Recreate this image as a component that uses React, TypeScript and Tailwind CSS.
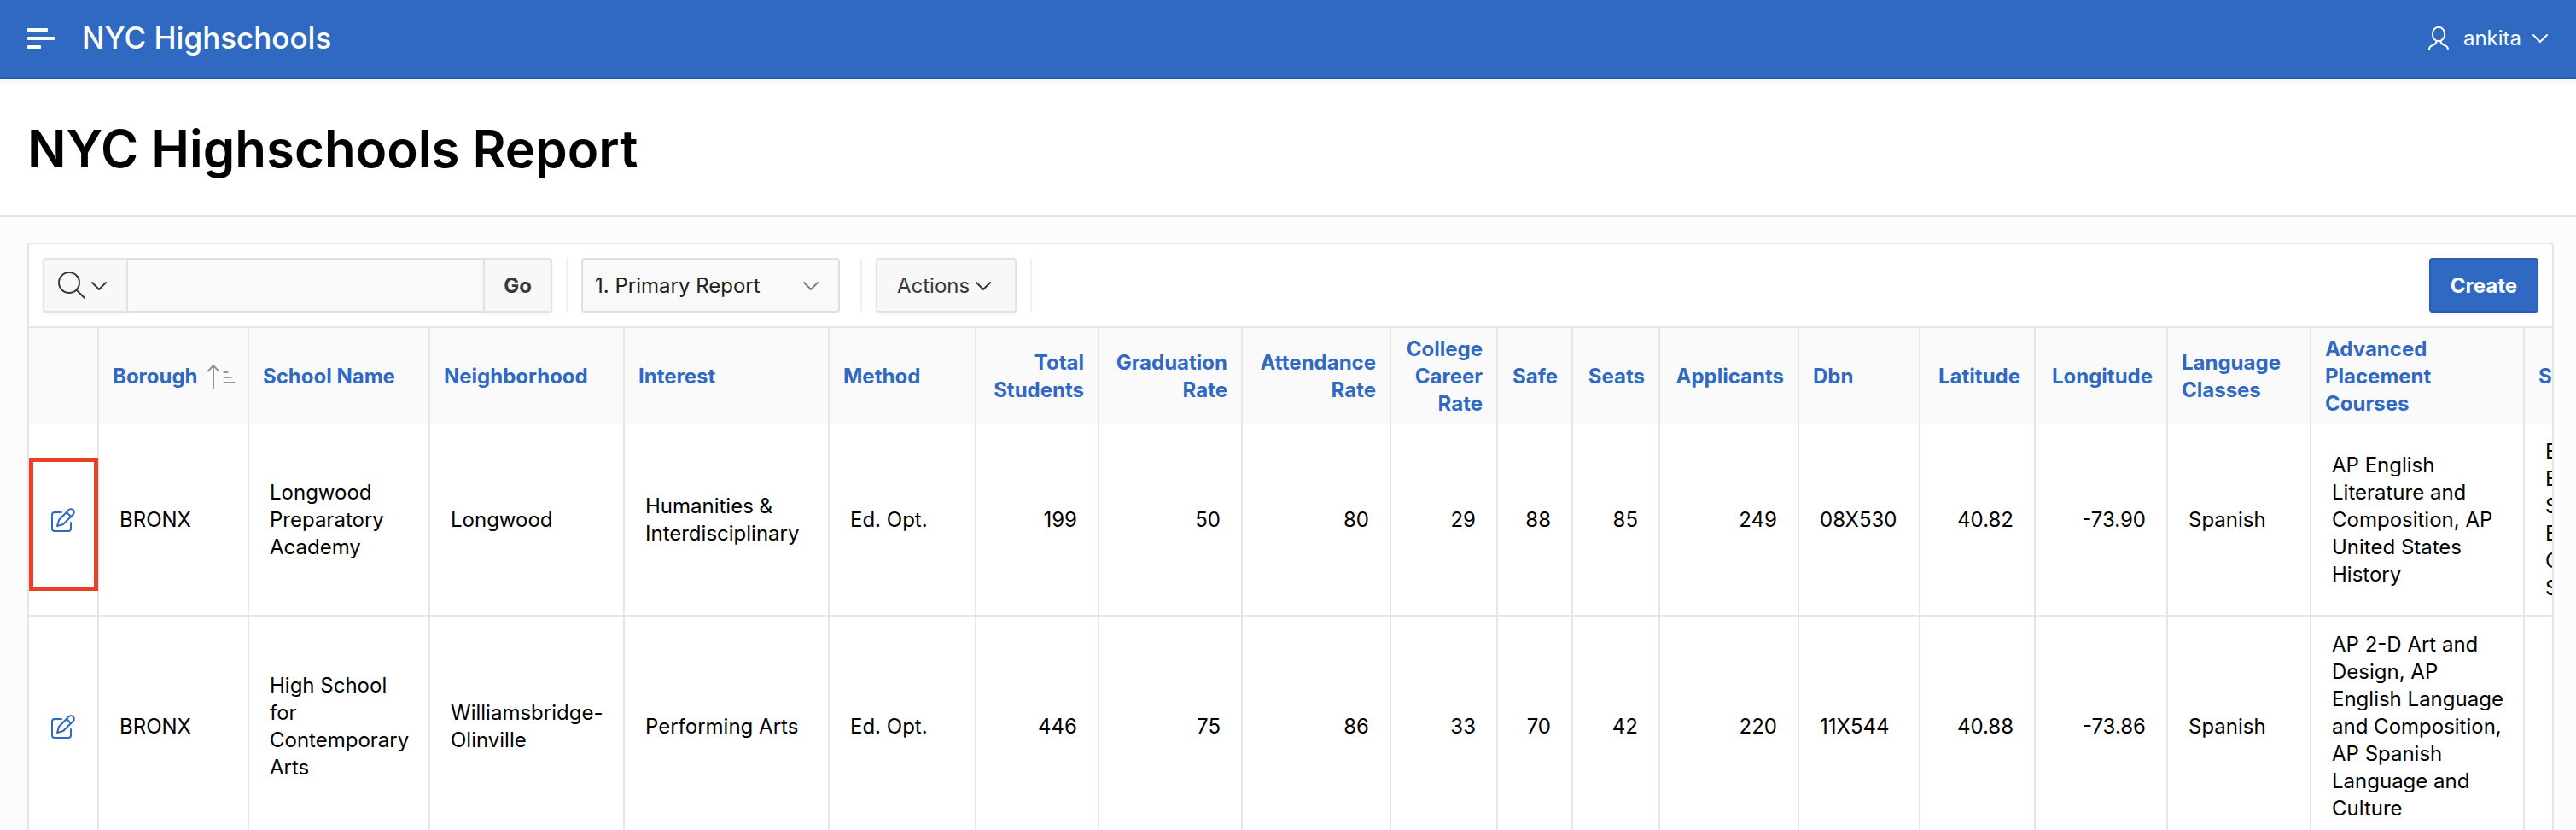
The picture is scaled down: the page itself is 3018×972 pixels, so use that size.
import React from "react";

type IconProps = { className?: string };

const ChevronDown = ({ className }: IconProps) => (
  <svg viewBox="0 0 20 12" fill="none" stroke="currentColor" strokeWidth="2" strokeLinecap="round" strokeLinejoin="round" className={className} aria-hidden="true">
    <path d="M2 2l8 8 8-8" />
  </svg>
);

const MenuIcon = () => (
  <svg viewBox="0 0 32 24" fill="currentColor" className="h-6 w-8" aria-hidden="true">
    <rect x="0" y="0" width="24" height="4" rx="1" />
    <rect x="0" y="10" width="32" height="4" rx="1" />
    <rect x="0" y="20" width="16" height="4" rx="1" />
  </svg>
);

const UserIcon = () => (
  <svg viewBox="0 0 26 30" fill="none" stroke="currentColor" strokeWidth="2" strokeLinecap="round" className="h-[30px] w-[26px]" aria-hidden="true">
    <ellipse cx="13" cy="10" rx="7.2" ry="8.2" />
    <path d="M10.500 18.200c0 4-2.500 3.800-5.500 5.200C2.500 24.600 2 25.500 2 28M15.500 18.200c0 4 2.500 3.800 5.500 5.200 2.500 1.200 3 2.100 3 4.600" />
  </svg>
);

const SearchIcon = () => (
  <svg viewBox="0 0 34 34" fill="none" stroke="currentColor" strokeWidth="2" strokeLinecap="round" className="size-[34px]" aria-hidden="true">
    <circle cx="13" cy="13" r="12" />
    <path d="M21.500 21.500l9.500 9.500" />
  </svg>
);

const SortIcon = () => (
  <svg viewBox="0 0 34 30" fill="none" stroke="currentColor" strokeWidth="2" strokeLinecap="round" strokeLinejoin="round" className="h-[30px] w-[34px] shrink-0 text-[#959595]" aria-hidden="true">
    <path d="M8 28V2M2 8.500l6-6.500 6 6.500M20.500 10h4M20.500 16h8M20.500 22h12" />
  </svg>
);

const EditIcon = () => (
  <svg viewBox="0 0 28 28" fill="none" stroke="currentColor" strokeWidth="2" strokeLinecap="round" strokeLinejoin="round" className="size-7" aria-hidden="true">
    <path d="M12 5H4a3 3 0 0 0-3 3v16a3 3 0 0 0 3 3h16a3 3 0 0 0 3-3v-7" />
    <path d="M7 21l2-7L20.500 2.300a3.600 3.600 0 0 1 5.200 5.200L14 19zM18 5l5 5" />
  </svg>
);

type Column = { label: string; width: string; numeric?: boolean; sorted?: boolean };

const columns: Column[] = [
  { label: "Borough", width: "w-[176px]", sorted: true },
  { label: "School Name", width: "w-[212px]" },
  { label: "Neighborhood", width: "w-[228px]" },
  { label: "Interest", width: "w-[240px]" },
  { label: "Method", width: "w-[172px]" },
  { label: "Total Students", width: "w-[144px]", numeric: true },
  { label: "Graduation Rate", width: "w-[168px]", numeric: true },
  { label: "Attendance Rate", width: "w-[174px]", numeric: true },
  { label: "College Career Rate", width: "w-[125px]", numeric: true },
  { label: "Safe", width: "w-[88px]", numeric: true },
  { label: "Seats", width: "w-[102px]", numeric: true },
  { label: "Applicants", width: "w-[163px]", numeric: true },
  { label: "Dbn", width: "w-[142px]" },
  { label: "Latitude", width: "w-[135px]", numeric: true },
  { label: "Longitude", width: "w-[155px]", numeric: true },
  { label: "Language Classes", width: "w-[168px]" },
  { label: "Advanced Placement Courses", width: "w-[250px]" },
  { label: "School Sports", width: "w-[220px]" },
];

const rows: string[][] = [
  ["BRONX", "Longwood Preparatory Academy", "Longwood", "Humanities & Interdisciplinary", "Ed. Opt.", "199", "50", "80", "29", "88", "85", "249", "08X530", "40.82", "-73.90", "Spanish", "AP English Literature and Composition, AP United States History", "Basketball,\nBowling,\nSoftball,\nBaseball,\nCross Country,\nSoccer"],
  ["BRONX", "High School for Contemporary Arts", "Williamsbridge-Olinville", "Performing Arts", "Ed. Opt.", "446", "75", "86", "33", "70", "42", "220", "11X544", "40.88", "-73.86", "Spanish", "AP 2-D Art and Design, AP English Language and Composition, AP Spanish Language and Culture", ""],
];

const Divider = () => <span className="w-[2px] self-stretch bg-[#f0f0f0]" />;

export default function App() {
  return (
    <div className="min-h-screen bg-[#fcfcfc] font-['Inter','Liberation_Sans',sans-serif] text-2xl leading-8 text-black">
      <header className="relative flex h-[92px] items-center border-b-2 border-[#2a5db0] bg-[#2f69c2] px-8 text-white shadow-[0_2px_8px_rgba(0,0,0,0.08)]">
        <button type="button" aria-label="Main navigation">
          <MenuIcon />
        </button>
        <a href="#home" className="ml-8 pb-0.5 text-[35px] font-medium">NYC Highschools</a>
        <button type="button" className="ml-auto flex items-center">
          <UserIcon />
          <span className="ml-4">ankita</span>
          <ChevronDown className="ml-3 h-3 w-5" />
        </button>
      </header>

      <div className="flex h-[162px] items-center border-b-2 border-[#e4e4e4] bg-white px-8 pt-1">
        <h1 className="text-6xl leading-[80px] font-semibold">NYC Highschools Report</h1>
      </div>

      <main className="pt-[30px] pr-[26px] pl-8">
        <section className="overflow-hidden rounded-sm border-2 border-[#e6e6e6] bg-white">
          <div className="flex h-24 items-center gap-4 p-4 text-[#383838]">
            <form className="flex h-16" onSubmit={(e) => e.preventDefault()}>
              <button type="button" aria-label="Select columns to search" className="flex w-[100px] items-center gap-1 rounded-l-sm border-2 border-[#e3e3e3] bg-[#f8f8f8] px-4 pt-0.5 shadow-[0_2px_4px_rgba(0,0,0,0.05)]">
                <SearchIcon />
                <ChevronDown className="h-3 w-5" />
              </button>
              <input type="text" aria-label="Search report" className="w-[416px] border-y-2 border-[#dfdfdf] bg-[#f9f9f9] px-3 outline-none" />
              <button type="submit" className="w-[81px] rounded-r-sm border-2 border-[#e3e3e3] bg-[#f8f8f8] pt-0.5 font-bold shadow-[0_2px_4px_rgba(0,0,0,0.05)]">Go</button>
            </form>
            <Divider />
            <div className="relative mr-2 h-16">
              <select aria-label="Saved reports" className="h-full w-[303px] appearance-none rounded-sm border-2 border-[#dfdfdf] bg-[#f9f9f9] px-[14px] pt-0.5 text-[#202020]">
                <option>1. Primary Report</option>
              </select>
              <ChevronDown className="pointer-events-none absolute top-[27px] right-6 h-3 w-5 text-[#808080]" />
            </div>
            <Divider />
            <button type="button" className="flex h-16 items-center gap-1.5 rounded-sm border-2 border-[#e3e3e3] bg-[#f8f8f8] pt-0.5 pr-[27px] pl-[23px] shadow-[0_2px_4px_rgba(0,0,0,0.05)]">
              Actions
              <ChevronDown className="h-3 w-5" />
            </button>
            <Divider />
            <a href="#create" className="ml-auto flex h-16 items-center rounded-sm border-2 border-[#2a5db0] bg-[#2f69c2] px-[23px] pt-0.5 font-bold text-white shadow-[0_2px_4px_rgba(0,0,0,0.05)]">Create</a>
          </div>

          <table className="w-[3143px] table-fixed border-collapse">
            <thead className="border-t-2 border-[#e6e6e6]">
              <tr className="bg-[#fafafa] text-[#2f69c2]">
                <th scope="col" className="w-[81px]" aria-label="Edit" />
                {columns.map((c) => (
                  <th key={c.label} scope="col" className={`${c.width} border-l-2 border-[#e6e6e6] px-4 pt-[9px] pb-[7px] font-bold ${c.numeric ? "text-right" : "text-left"}`}>
                    {c.sorted ? (
                      <a href="#sort" className="flex items-center gap-2.5">
                        {c.label}
                        <SortIcon />
                      </a>
                    ) : (
                      <a href="#sort">{c.label}</a>
                    )}
                  </th>
                ))}
              </tr>
            </thead>
            <tbody>
              {rows.map((row, r) => (
                <tr key={r} className="border-b-2 border-[#e6e6e6]">
                  <td className="relative text-center">
                    <a href="#edit" aria-label="Edit row" className="inline-flex align-middle text-[#2f69c2]">
                      <EditIcon />
                    </a>
                    {r === 0 && <span className="pointer-events-none absolute top-10 -right-px left-0 h-[156px] border-[5px] border-[#ea4025]" />}
                  </td>
                  {row.map((cell, i) => (
                    <td key={i} className={`border-l-2 border-[#e6e6e6] pt-[17px] pb-[15px] pl-6 whitespace-pre-line ${columns[i].numeric ? "pr-6 text-right" : "pr-5 text-left"}`}>{cell}</td>
                  ))}
                </tr>
              ))}
            </tbody>
          </table>
        </section>
      </main>
    </div>
  );
}
